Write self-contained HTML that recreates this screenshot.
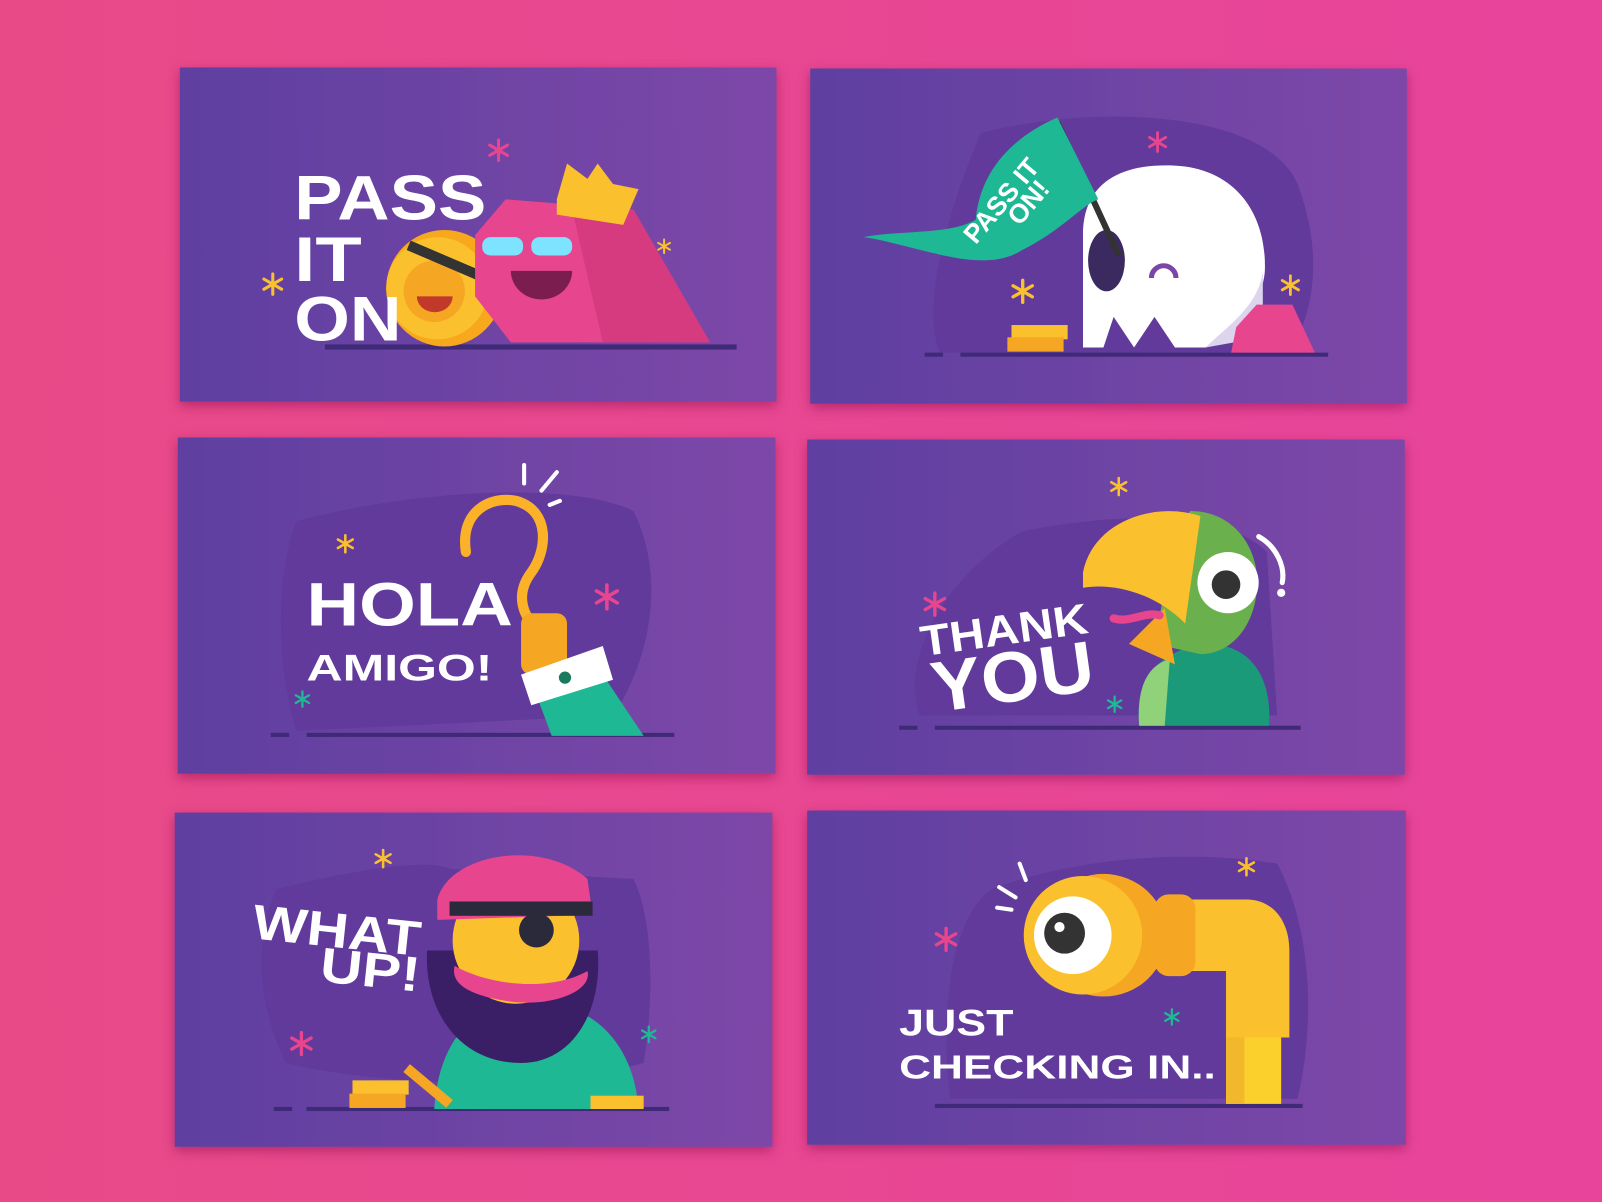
<!DOCTYPE html>
<html><head><meta charset="utf-8"><style>
html,body{margin:0;padding:0;width:1602px;height:1202px;overflow:hidden;background:#e8479a}
svg{display:block}
text{font-family:"Liberation Sans",sans-serif;font-weight:900;fill:#fff}
</style></head><body>
<svg width="1602" height="1202" viewBox="0 0 1568 1176" preserveAspectRatio="none" xmlns="http://www.w3.org/2000/svg">
<defs>
<linearGradient id="bg" x1="0" x2="1" y1="0" y2="0"><stop offset="0" stop-color="#e84a88"/><stop offset="1" stop-color="#e8449c"/></linearGradient>
<linearGradient id="cd" x1="0" x2="1" y1="0" y2="0"><stop offset="0" stop-color="#5e40a0"/><stop offset="1" stop-color="#7d47a8"/></linearGradient>
<filter id="sh" x="-10%" y="-10%" width="120%" height="130%"><feDropShadow dx="0" dy="4" stdDeviation="6" flood-color="#7a1040" flood-opacity="0.45"/></filter>
<symbol id="ast" viewBox="-12 -12 24 24" overflow="visible"><path d="M0 -10V10M-8.7 -5L8.7 5M-8.7 5L8.7 -5" stroke-width="3" stroke-linecap="round"/></symbol>
</defs>
<rect width="1568" height="1176" fill="url(#bg)"/>
<g filter="url(#sh)">
<rect x="176" y="66" width="584" height="327" fill="url(#cd)"/>
<rect x="793" y="67" width="584" height="328" fill="url(#cd)"/>
<rect x="174" y="428" width="585" height="329" fill="url(#cd)"/>
<rect x="790" y="430" width="585" height="328" fill="url(#cd)"/>
<rect x="171" y="795" width="585" height="327" fill="url(#cd)"/>
<rect x="790" y="793" width="586" height="327" fill="url(#cd)"/>
</g>

<!-- Card 1 -->
<rect x="318" y="337" width="403" height="5" fill="#3f2a78"/>
<circle cx="435" cy="282" r="57" fill="#f7a81c"/><circle cx="428" cy="282" r="50" fill="#fbc02d"/>
<circle cx="425" cy="285" r="30" fill="#f5a623"/>
<path d="M408 290 h35 a17 15 0 0 1 -35 0z" fill="#c0392b"/>
<path d="M400 240 L470 270" stroke="#333" stroke-width="10"/>
<polygon points="465,230 495,195 620,205 695,335 500,335 465,290" fill="#e8458f"/>
<polygon points="560,205 620,205 695,335 590,335" fill="#d63a7f"/>
<polygon points="545,195 555,160 575,175 585,160 600,180 625,185 610,220 545,210" fill="#fbc02d"/>
<rect x="472" y="232" width="40" height="18" rx="8" fill="#7de3ff"/><rect x="520" y="232" width="40" height="18" rx="8" fill="#7de3ff"/>
<path d="M500 265 a30 28 0 0 0 60 0z" fill="#7b1d4f"/>
<text x="288" y="215" font-size="62" textLength="188" lengthAdjust="spacingAndGlyphs">PASS</text>
<text x="288" y="275" font-size="62" textLength="66" lengthAdjust="spacingAndGlyphs">IT</text>
<text x="288" y="333" font-size="62" textLength="105" lengthAdjust="spacingAndGlyphs">ON</text>
<use href="#ast" x="476" y="135" width="24" height="24" stroke="#e8458f"/>
<use href="#ast" x="255" y="266" width="24" height="24" stroke="#fbc02d"/>
<use href="#ast" x="642" y="233" width="16" height="16" stroke="#fbc02d"/>

<!-- Card 2 -->
<path d="M960 130 C1080 100 1240 110 1270 180 C1300 260 1280 320 1260 345 L920 345 C900 300 930 200 960 130z" fill="#613a9c"/>
<rect x="940" y="345" width="360" height="4" fill="#3f2a78"/><rect x="905" y="345" width="18" height="4" fill="#3f2a78"/>
<path d="M1060 340 L1060 230 C1060 170 1110 160 1150 162 C1210 165 1240 210 1238 265 C1236 300 1200 330 1180 340 L1150 340 L1130 310 L1110 340 L1090 310 L1080 340z" fill="#fff"/>
<path d="M1180 340 C1200 320 1232 300 1236 265 L1236 330 z" fill="#ddd4ee"/>
<ellipse cx="1083" cy="255" rx="18" ry="30" fill="#3a2a60"/>
<path d="M1127 272 a12 12 0 0 1 24 0" stroke="#7b46a6" stroke-width="5" fill="none"/>
<path d="M1035 120 L1095 250" stroke="#333" stroke-width="6"/>
<path d="M1035 115 C1000 130 960 160 955 215 C930 230 880 225 845 232 C900 240 960 270 1000 245 C1040 225 1060 200 1075 195z" fill="#1fb894"/>
<text x="0" y="0" font-size="26" transform="translate(955 240) rotate(-50)">PASS IT</text>
<text x="0" y="0" font-size="26" transform="translate(998 222) rotate(-50)">ON!</text>
<rect x="990" y="318" width="55" height="14" fill="#fbc02d"/><rect x="986" y="330" width="55" height="14" fill="#f5a623"/>
<polygon points="1210,320 1230,298 1265,298 1287,345 1205,345" fill="#e8458f"/>
<use href="#ast" x="1122" y="128" width="22" height="22" stroke="#e8458f"/>
<use href="#ast" x="988" y="272" width="26" height="26" stroke="#fbc02d"/>
<use href="#ast" x="1252" y="268" width="22" height="22" stroke="#fbc02d"/>

<!-- Card 3 -->
<path d="M290 510 C400 480 560 470 620 500 C650 560 640 640 600 700 L290 715 C270 650 270 560 290 510z" fill="#613a9c"/>
<rect x="300" y="717" width="360" height="4" fill="#3f2a78"/><rect x="265" y="717" width="18" height="4" fill="#3f2a78"/>
<path d="M456 540 C450 500 480 485 505 490 C540 500 535 540 520 560 C505 580 510 600 525 615" stroke="#fbb128" stroke-width="10" fill="none" stroke-linecap="round"/>
<rect x="510" y="600" width="45" height="60" rx="10" fill="#f5a623"/>
<polygon points="525,680 590,660 630,720 540,720" fill="#1fb894"/>
<polygon points="510,660 590,632 600,665 520,690" fill="#fff"/>
<circle cx="553" cy="663" r="6" fill="#1a7a5e"/>
<path d="M513 455 v18 M545 462 l-15 18 M548 490 l-10 4" stroke="#fff" stroke-width="4" stroke-linecap="round"/>
<text x="300" y="612" font-size="60" textLength="202" lengthAdjust="spacingAndGlyphs">HOLA</text>
<text x="300" y="666" font-size="36" textLength="182" lengthAdjust="spacingAndGlyphs">AMIGO!</text>
<use href="#ast" x="328" y="522" width="20" height="20" stroke="#fbc02d"/>
<use href="#ast" x="580" y="570" width="28" height="28" stroke="#e8458f"/>
<use href="#ast" x="287" y="675" width="18" height="18" stroke="#1fb894"/>

<!-- Card 4 -->
<path d="M1000 520 C1100 500 1200 500 1240 540 L1250 700 L900 700 C880 640 930 560 1000 520z" fill="#613a9c"/>
<rect x="915" y="710" width="358" height="4" fill="#3f2a78"/><rect x="880" y="710" width="18" height="4" fill="#3f2a78"/>
<path d="M1115 710 C1110 660 1140 635 1180 630 C1230 630 1245 670 1242 710z" fill="#1a9a78"/>
<path d="M1115 710 C1112 670 1125 650 1145 645 L1140 710z" fill="#8fd27a"/>
<path d="M1165 500 C1210 500 1235 540 1230 580 C1225 620 1200 640 1175 640 L1130 630 L1150 520z" fill="#6ab04c"/>
<path d="M1060 560 C1070 510 1130 490 1175 505 L1160 610 C1130 580 1090 570 1060 575z" fill="#fbc02d"/>
<polygon points="1105,630 1140,595 1150,650" fill="#f5a623"/>
<path d="M1090 605 C1105 610 1120 598 1135 602" stroke="#e8458f" stroke-width="8" fill="none" stroke-linecap="round"/>
<circle cx="1202" cy="570" r="30" fill="#fff"/><circle cx="1200" cy="572" r="14" fill="#333"/>
<path d="M1232 525 C1250 535 1258 555 1255 570" stroke="#fff" stroke-width="5" fill="none" stroke-linecap="round"/><circle cx="1254" cy="580" r="4" fill="#fff"/>
<text x="0" y="0" font-size="42" textLength="165" lengthAdjust="spacingAndGlyphs" transform="translate(903 642) rotate(-8)">THANK</text>
<text x="0" y="0" font-size="70" textLength="160" lengthAdjust="spacingAndGlyphs" transform="translate(915 697) rotate(-8)">YOU</text>
<use href="#ast" x="1085" y="466" width="20" height="20" stroke="#fbc02d"/>
<use href="#ast" x="902" y="578" width="26" height="26" stroke="#e8458f"/>
<use href="#ast" x="1082" y="680" width="18" height="18" stroke="#1fb894"/>

<!-- Card 5 -->
<path d="M270 870 C350 850 420 840 440 850 L620 860 C640 900 640 980 630 1040 C520 1070 360 1060 280 1040 C250 980 250 920 270 870z" fill="#613a9c"/>
<rect x="300" y="1083" width="355" height="4" fill="#3f2a78"/><rect x="268" y="1083" width="18" height="4" fill="#3f2a78"/>
<path d="M425 1085 C430 1010 470 980 520 980 C580 980 620 1020 625 1085z" fill="#1fb894"/>
<path d="M418 930 C415 990 450 1040 510 1040 C560 1040 590 990 585 930z" fill="#3a1f66"/>
<circle cx="505" cy="920" r="62" fill="#fbc02d"/>
<path d="M428 880 C440 835 530 820 575 860 L580 895 L428 900z" fill="#e8458f"/>
<rect x="440" y="882" width="140" height="14" fill="#2a2a3a"/>
<circle cx="525" cy="910" r="17" fill="#2a2a3a"/>
<path d="M445 945 C480 965 540 970 575 950 C580 970 540 985 500 980 C465 975 440 965 445 945z" fill="#e8458f"/>
<rect x="345" y="1057" width="55" height="14" fill="#fbc02d"/><rect x="342" y="1070" width="55" height="14" fill="#f5a623"/>
<rect x="578" y="1072" width="52" height="13" fill="#fbc02d"/>
<path d="M398 1045 L440 1080" stroke="#f5a623" stroke-width="10"/>
<text x="0" y="0" font-size="48" textLength="165" lengthAdjust="spacingAndGlyphs" transform="translate(246 918) rotate(6)">WHAT</text>
<text x="0" y="0" font-size="48" textLength="98" lengthAdjust="spacingAndGlyphs" transform="translate(312 960) rotate(6)">UP!</text>
<use href="#ast" x="365" y="830" width="20" height="20" stroke="#fbc02d"/>
<use href="#ast" x="282" y="1008" width="26" height="26" stroke="#e8458f"/>
<use href="#ast" x="626" y="1003" width="18" height="18" stroke="#1fb894"/>

<!-- Card 6 -->
<path d="M970 870 C1050 840 1160 830 1250 845 C1280 900 1290 990 1270 1075 L930 1075 C920 990 930 900 970 870z" fill="#613a9c"/>
<rect x="915" y="1080" width="360" height="4" fill="#3f2a78"/>
<rect x="1200" y="1010" width="54" height="70" fill="#fbd02d"/><rect x="1200" y="1010" width="18" height="70" fill="#f0b82a"/>
<path d="M1140 880 L1220 880 C1245 880 1262 900 1262 930 L1262 1015 L1200 1015 L1200 950 L1140 950z" fill="#fbc02d"/>
<rect x="1130" y="875" width="40" height="80" rx="14" fill="#f5a623"/>
<ellipse cx="1080" cy="915" rx="62" ry="60" fill="#f5a623"/>
<ellipse cx="1060" cy="915" rx="58" ry="58" fill="#fbc02d"/>
<circle cx="1050" cy="915" r="38" fill="#fff"/><circle cx="1042" cy="913" r="20" fill="#333"/><circle cx="1037" cy="907" r="5" fill="#fff"/>
<path d="M978 868 l16 10 M998 845 l6 16 M990 890 l-14 -2" stroke="#fff" stroke-width="4" stroke-linecap="round"/>
<text x="880" y="1013" font-size="36" textLength="112" lengthAdjust="spacingAndGlyphs">JUST</text>
<text x="880" y="1055" font-size="33" textLength="310" lengthAdjust="spacingAndGlyphs">CHECKING IN..</text>
<use href="#ast" x="1210" y="838" width="20" height="20" stroke="#fbc02d"/>
<use href="#ast" x="913" y="906" width="26" height="26" stroke="#e8458f"/>
<use href="#ast" x="1138" y="986" width="18" height="18" stroke="#1fb894"/>
</svg>
</body></html>
